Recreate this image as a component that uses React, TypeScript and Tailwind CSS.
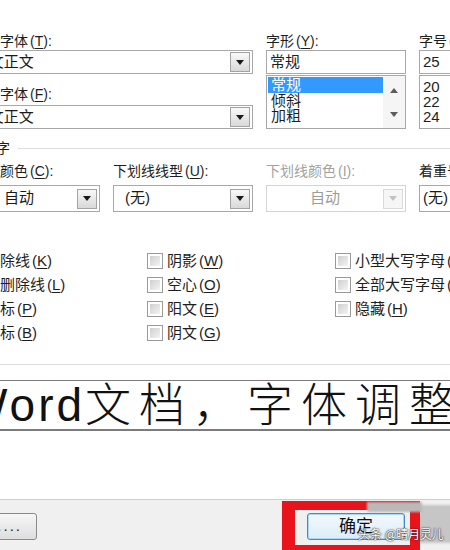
import React from "react";

const FONT = "font-['Liberation_Sans','Noto_Sans_CJK_SC',sans-serif]";

function Acc({ k }: { k: string }) {
  return (
    <span className="ml-[2px]">
      (<span className="underline underline-offset-2">{k}</span>):
    </span>
  );
}

function AccNoColon({ k }: { k: string }) {
  return (
    <span className="ml-[2px]">
      (<span className="underline underline-offset-2">{k}</span>)
    </span>
  );
}

function Label({
  children,
  className = "",
  disabled = false,
}: {
  children: React.ReactNode;
  className?: string;
  disabled?: boolean;
}) {
  return (
    <div
      className={`h-[18px] whitespace-nowrap text-[14px] leading-[18px] ${
        disabled ? "text-[#a2a2a2]" : "text-[#1e1e1e]"
      } ${className}`}
    >
      {children}
    </div>
  );
}

function DropButton({ disabled = false }: { disabled?: boolean }) {
  return (
    <div
      className={
        disabled
          ? "flex h-[20px] w-[20px] shrink-0 items-center justify-center border border-[#dadada] bg-[#f6f6f6]"
          : "flex h-[20px] w-[20px] shrink-0 items-center justify-center border border-[#a3a3a3] bg-gradient-to-b from-[#f8f8f8] to-[#d9d9d9]"
      }
    >
      <svg width="8" height="5" viewBox="0 0 8 5">
        <path d="M0 0H8L4 5Z" fill={disabled ? "#c2c2c2" : "#1a1a1a"} />
      </svg>
    </div>
  );
}

function Combo({
  children,
  className = "",
  textClass = "pl-[4px]",
  disabled = false,
}: {
  children: React.ReactNode;
  className?: string;
  textClass?: string;
  disabled?: boolean;
}) {
  return (
    <div
      className={`flex items-center bg-white pr-[2px] ${
        disabled ? "border border-[#d4d4d4]" : "border border-[#a8a8a8]"
      } ${className}`}
    >
      <div
        className={`flex-1 overflow-hidden whitespace-nowrap text-[15px] ${
          disabled ? "text-[#9c9c9c]" : "text-[#1a1a1a]"
        } ${textClass}`}
      >
        {children}
      </div>
      <DropButton disabled={disabled} />
    </div>
  );
}

function ScrollArrows() {
  return (
    <div className="flex w-[22px] flex-col items-center justify-center gap-[19px] bg-[#f5f5f5]">
      <svg width="8" height="5" viewBox="0 0 8 5">
        <path d="M0 5H8L4 0Z" fill="#5c5c5c" />
      </svg>
      <svg width="8" height="5" viewBox="0 0 8 5">
        <path d="M0 0H8L4 5Z" fill="#5c5c5c" />
      </svg>
    </div>
  );
}

function Check({ children }: { children: React.ReactNode }) {
  return (
    <div className="flex items-center gap-[4px] whitespace-nowrap">
      <div className="h-[16px] w-[16px] shrink-0 border border-[#9a9a9a] bg-white p-[2px]">
        <div className="h-full w-full bg-gradient-to-br from-[#cfcfcf] to-[#f4f4f4]" />
      </div>
      <span>{children}</span>
    </div>
  );
}

export default function App() {
  return (
    <div
      className={`relative flex h-[550px] w-[450px] flex-col overflow-hidden bg-white text-[#1e1e1e] ${FONT}`}
    >
      <div className="flex flex-1 flex-col">
        {/* font / style / size */}
        <div className="ml-[-40px] mt-[32px] grid w-[600px] grid-cols-[140px_140px_140px_140px] gap-x-[13px]">
          <div className="col-span-2 flex flex-col">
            <Label className="pl-[12px]">
              中文字体<Acc k="T" />
            </Label>
            <Combo className="h-[24px]">+中文正文</Combo>
            <Label className="mt-[11px] pl-[12px]">
              西文字体<Acc k="F" />
            </Label>
            <Combo className="mt-[2px] h-[24px]">+西文正文</Combo>
          </div>

          <div className="flex flex-col">
            <Label>
              字形<Acc k="Y" />
            </Label>
            <div className="flex h-[24px] items-center border border-[#a8a8a8] pl-[3px] text-[15px]">
              常规
            </div>
            <div className="mt-[1px] flex h-[54px] border border-[#a8a8a8]">
              <div className="flex-1 pl-[1px] pt-[1px] text-[15px] leading-[15px]">
                <div className="h-[16px] bg-[#3399ff] pl-[3px] leading-[16px] text-white">常规</div>
                <div className="pl-[3px]">倾斜</div>
                <div className="pl-[3px]">加粗</div>
              </div>
              <ScrollArrows />
            </div>
          </div>

          <div className="flex flex-col">
            <Label>
              字号<Acc k="S" />
            </Label>
            <div className="flex h-[24px] items-center border border-[#a8a8a8] pl-[3px] text-[15px]">
              25
            </div>
            <div className="mt-[1px] flex h-[54px] flex-col border border-[#a8a8a8] pl-[3px] pt-[3px] text-[15px] leading-[15px]">
              <div>20</div>
              <div>22</div>
              <div>24</div>
            </div>
          </div>
        </div>

        {/* all text heading */}
        <div className="ml-[-46px] mt-[10px] flex h-[18px] items-center text-[14px]">
          <span className="whitespace-nowrap">所有文字</span>
          <div className="ml-[8px] h-px flex-1 bg-[#dedede]" />
        </div>

        {/* colours / underline */}
        <div className="ml-[-40px] mt-[5px] grid w-[600px] grid-cols-[140px_140px_140px_140px] gap-x-[13px]">
          <div className="flex flex-col">
            <Label className="pl-[12px]">
              字体颜色<Acc k="C" />
            </Label>
            <Combo className="mt-[5px] h-[27px]" textClass="text-center">
              自动
            </Combo>
          </div>
          <div className="flex flex-col">
            <Label>
              下划线线型<Acc k="U" />
            </Label>
            <Combo className="mt-[5px] h-[27px]" textClass="pl-[11px]">
              (无)
            </Combo>
          </div>
          <div className="flex flex-col">
            <Label disabled>
              下划线颜色<Acc k="I" />
            </Label>
            <Combo className="mt-[5px] h-[27px]" textClass="text-center" disabled>
              自动
            </Combo>
          </div>
          <div className="flex flex-col">
            <Label>
              着重号<Acc k="·" />
            </Label>
            <Combo className="mt-[5px] h-[27px]" textClass="pl-[3px]">
              (无)
            </Combo>
          </div>
        </div>

        {/* effects */}
        <div className="ml-[-35px] mt-[37px] grid grid-flow-col grid-cols-[182px_188px_200px] grid-rows-[repeat(4,24px)] text-[15px] leading-[24px]">
          <Check>
            删除线<AccNoColon k="K" />
          </Check>
          <Check>
            双删除线<AccNoColon k="L" />
          </Check>
          <Check>
            上标<AccNoColon k="P" />
          </Check>
          <Check>
            下标<AccNoColon k="B" />
          </Check>
          <Check>
            阴影<AccNoColon k="W" />
          </Check>
          <Check>
            空心<AccNoColon k="O" />
          </Check>
          <Check>
            阳文<AccNoColon k="E" />
          </Check>
          <Check>
            阴文<AccNoColon k="G" />
          </Check>
          <Check>
            小型大写字母<AccNoColon k="M" />
          </Check>
          <Check>
            全部大写字母<AccNoColon k="A" />
          </Check>
          <Check>
            隐藏<AccNoColon k="H" />
          </Check>
        </div>

        <div className="mt-[19px] h-px bg-[#dedede]" />

        {/* preview */}
        <div className="mt-[15px] flex h-[51px] items-center border-b-2 border-t border-[#7c7c7c]">
          <div className="ml-[-36px] whitespace-nowrap text-[46px] font-light leading-[46px] text-[#111]">
            <span className="tracking-[3px]">Word</span>
            <span className="tracking-[8px]">文档，字体调整</span>
          </div>
        </div>
      </div>

      {/* button bar */}
      <div className="flex h-[51px] items-start border-t border-[#cfcfcf] bg-[#f0f0f0] pt-[13px]">
        <button className="ml-[-61px] flex h-[27px] w-[98px] shrink-0 items-center justify-end whitespace-nowrap rounded-[3px] border border-[#8a8a8a] bg-gradient-to-b from-[#f6f6f6] to-[#dedede] pr-[14px] text-[15px] tracking-[2px]">
          文字效果(E)....
        </button>
        <button className="ml-[270px] flex h-[27px] w-[98px] shrink-0 items-center justify-center rounded-[3px] border border-[#3a8ecf] bg-gradient-to-b from-[#f3f9fd] to-[#dcecf7] text-[17px] text-[#111] shadow-[inset_0_0_0_1px_#a8d8f5]">
          确定
        </button>
      </div>

      {/* annotation overlays */}
      <div className="absolute left-[415px] top-[505px] h-[38px] w-[40px] bg-[#c6c6c6] blur-[1px]" />
      <div className="absolute left-[282px] top-[501px] h-[49px] w-[138px] border-b-[5px] border-l-[13px] border-r-[10px] border-t-[9px] border-[#e8141c]" />
      <div className="absolute left-[367px] top-[502px] h-[10px] w-[55px] bg-[#b9b9b9] blur-[1px]" />
      <div className="absolute left-[358px] top-[528px] whitespace-nowrap text-[12px] leading-[14px] tracking-[-0.3px] text-white [text-shadow:0_0_2px_#222,0_0_1px_#222]">
        头条 @晴月灵儿
      </div>
    </div>
  );
}
